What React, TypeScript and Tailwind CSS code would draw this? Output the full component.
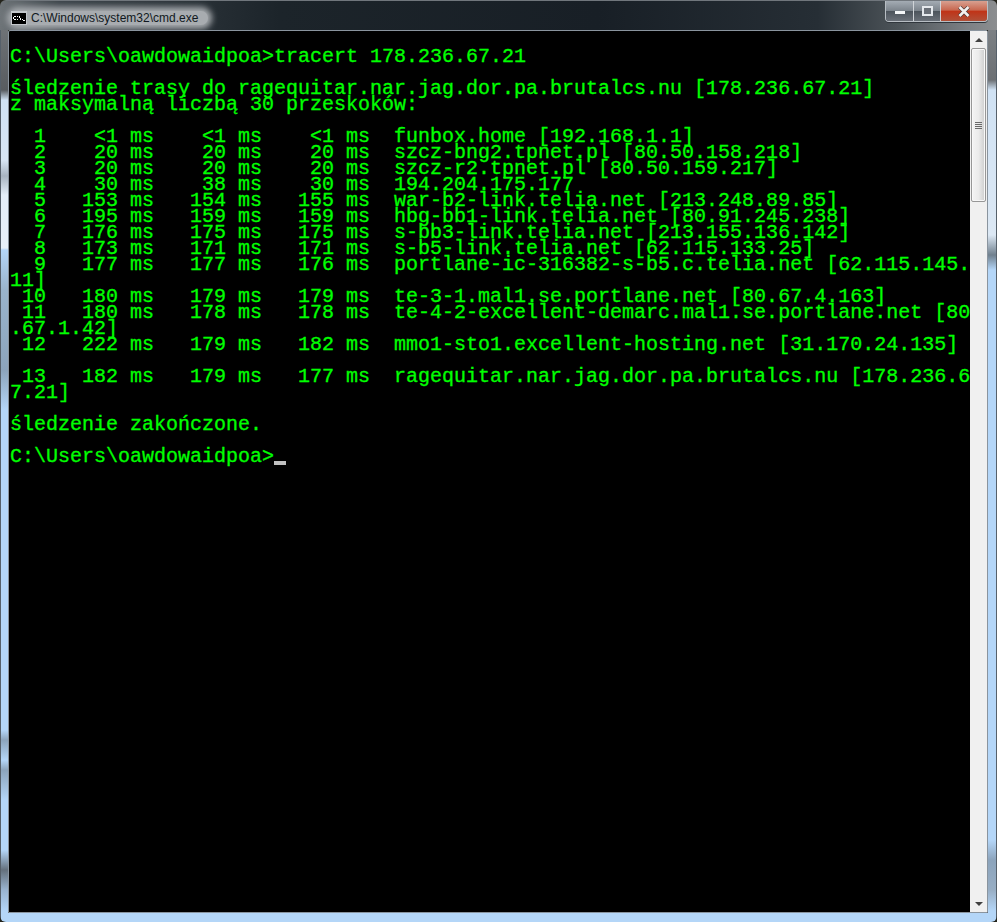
const LINES = [
  "",
  "C:\\Users\\oawdowaidpoa>tracert 178.236.67.21",
  "",
  "śledzenie trasy do ragequitar.nar.jag.dor.pa.brutalcs.nu [178.236.67.21]",
  "z maksymalną liczbą 30 przeskoków:",
  "",
  "  1    <1 ms    <1 ms    <1 ms  funbox.home [192.168.1.1]",
  "  2    20 ms    20 ms    20 ms  szcz-bng2.tpnet.pl [80.50.158.218]",
  "  3    20 ms    20 ms    20 ms  szcz-r2.tpnet.pl [80.50.159.217]",
  "  4    30 ms    38 ms    30 ms  194.204.175.177",
  "  5   153 ms   154 ms   155 ms  war-b2-link.telia.net [213.248.89.85]",
  "  6   195 ms   159 ms   159 ms  hbg-bb1-link.telia.net [80.91.245.238]",
  "  7   176 ms   175 ms   175 ms  s-bb3-link.telia.net [213.155.136.142]",
  "  8   173 ms   171 ms   171 ms  s-b5-link.telia.net [62.115.133.25]",
  "  9   177 ms   177 ms   176 ms  portlane-ic-316382-s-b5.c.telia.net [62.115.145.",
  "11]",
  " 10   180 ms   179 ms   179 ms  te-3-1.mal1.se.portlane.net [80.67.4.163]",
  " 11   180 ms   178 ms   178 ms  te-4-2-excellent-demarc.mal1.se.portlane.net [80",
  ".67.1.42]",
  " 12   222 ms   179 ms   182 ms  mmo1-sto1.excellent-hosting.net [31.170.24.135]",
  "",
  " 13   182 ms   179 ms   177 ms  ragequitar.nar.jag.dor.pa.brutalcs.nu [178.236.6",
  "7.21]",
  "",
  "śledzenie zakończone.",
  "",
];

function ConsoleIcon() {
  return (
    <svg width="16" height="14" viewBox="0 0 16 14" className="shrink-0" shapeRendering="crispEdges">
      <rect x="0" y="0" width="16" height="14" fill="#c4c8cc" />
      <rect x="1" y="2" width="14" height="11" fill="#000" />
      <path d="M3 5h2v1H3zM2 6h1v2H2zM3 8h2v1H3zM6 5h1v1H6zM6 8h1v1H6zM8 5h1v2H8zM9 7h1v2H9zM11 8h1v1h-1zM12 9h2v1h-2z" fill="#fff" />
    </svg>
  );
}

function Caption() {
  return (
    <div className="flex h-[21px] w-[103px] overflow-hidden rounded-b-[4px] border border-t-0 border-[#b8bec4] shadow-[0_1px_0_#30363c]">
      <button className="flex w-[28px] items-center justify-center border-r border-[#d0d4d8] bg-[linear-gradient(180deg,#a4acb4_0%,#7c848c_48%,#4c545c_52%,#6a7078_100%)]">
        <span className="mt-[2px] h-[3px] w-[10px] bg-[#f4f6f8]" />
      </button>
      <button className="flex w-[27px] items-center justify-center border-r border-[#d0d4d8] bg-[linear-gradient(180deg,#a4acb4_0%,#7c848c_48%,#4c545c_52%,#6a7078_100%)]">
        <span className="h-[10px] w-[11px] border-[2px] border-[#e4e8ec] bg-[#6a7078]" />
      </button>
      <button className="flex flex-1 items-center justify-center bg-[linear-gradient(180deg,#d8a090_0%,#c86850_45%,#c03418_52%,#b05038_100%)]">
        <svg width="14" height="11" viewBox="0 0 14 11">
          <path d="M2.5 1 L11.5 10 M11.5 1 L2.5 10" stroke="#4a3a38" strokeWidth="4" />
          <path d="M2.5 1 L11.5 10 M11.5 1 L2.5 10" stroke="#f2f0ee" strokeWidth="2.6" />
        </svg>
      </button>
    </div>
  );
}

function Scrollbar() {
  return (
    <div className="flex w-[17px] shrink-0 flex-col bg-[#f0f0f0]">
      <div className="flex h-[17px] items-center justify-center">
        <span className="h-0 w-0 border-x-[4px] border-b-[4px] border-x-transparent border-b-[#404040]" />
      </div>
      <div className="mx-[1px] flex h-[154px] items-center justify-center rounded-[2px] border border-[#979797] bg-[linear-gradient(90deg,#f4f4f4_0%,#ebebeb_50%,#cdcdcd_100%)] shadow-[inset_0_0_0_1px_#f8f8f8]">
        <div className="flex w-[7px] flex-col gap-[1px]">
          <span className="h-[1px] bg-[#6a6a6a]" />
          <span className="h-[1px] bg-[#6a6a6a]" />
          <span className="h-[1px] bg-[#6a6a6a]" />
          <span className="h-[1px] bg-[#6a6a6a]" />
        </div>
      </div>
      <div className="flex-1" />
      <div className="flex h-[17px] items-center justify-center">
        <span className="h-0 w-0 border-x-[4px] border-t-[4px] border-x-transparent border-t-[#404040]" />
      </div>
    </div>
  );
}

export default function App() {
  return (
    <div className="h-[922px] w-[997px] bg-[#24241c]">
      <div className="flex h-full flex-col overflow-hidden rounded-[6px]">
        <div className="flex h-[30px] shrink-0 items-start justify-between border-t border-[#70767c] bg-[linear-gradient(90deg,#6e7478_0%,#3c444a_6%,#1c242a_28%,#181f26_60%,#262e35_82%,#4c5358_90%,#7c8084_97%,#8c8e90_100%)] pl-[11px] pr-[9px]">
          <div className="mt-[10px] flex h-[14px] items-center gap-[4px] rounded-[7px] bg-[#a8acb0] pr-[10px] shadow-[0_0_6px_4px_#a8acb0]">
            <ConsoleIcon />
            <span className="font-['Liberation_Sans',sans-serif] text-[12px] leading-[14px] text-[#101820]">
              C:\Windows\system32\cmd.exe
            </span>
          </div>
          <Caption />
        </div>
        <div className="flex min-h-0 flex-1">
          <div className="w-[8px] shrink-0 border-l border-[#56606a] bg-[linear-gradient(180deg,#6e7276_0px,#585c60_60px,#d0e2f4_70px,#d8e6f4_130px,#a8b4c0_146px,#e4eef8_165px,#e8f0f8_218px,#b4d6f8_220px,#9ab4cc_260px,#8ca4bc_340px,#b4d6f8_380px,#b4d6f8_700px,#8ca4bc_710px,#b4d6f8_730px,#8ca4bc_740px,#b4d6f8_770px,#b4d6f8_820px,#64707c_840px,#9ab4d0_860px,#b4d6f8_881px)]" />
          <div className="flex min-h-0 min-w-0 flex-1 flex-col">
            <div className="flex min-h-0 flex-1 rounded-t-[2px] border border-[#8a949e] bg-black">
              <pre className="min-w-0 flex-1 overflow-hidden pl-[1px] pt-[2px] font-['Liberation_Mono',monospace] text-[20px] leading-[16px] text-[#00ff00] [-webkit-text-stroke:0.3px_#00ff00]">
                {LINES.join("\n")}
                {"\n"}
                {"C:\\Users\\oawdowaidpoa>"}
                <span className="inline-block h-[4px] w-[12px] bg-[#c0c0c0] align-[-3px]" />
              </pre>
              <Scrollbar />
            </div>
            <div className="h-[9px] shrink-0 bg-[#b4d6f8]" />
          </div>
          <div className="w-[9px] shrink-0 border-r border-[#56606a] bg-[linear-gradient(180deg,#7c8084_0px,#6c7074_50px,#d0e2f4_60px,#dce8f4_205px,#70808e_225px,#b4d6f8_240px,#b4d6f8_810px,#8ca4bc_830px,#98aec4_860px,#b4d6f8_881px)]" />
        </div>
      </div>
    </div>
  );
}
